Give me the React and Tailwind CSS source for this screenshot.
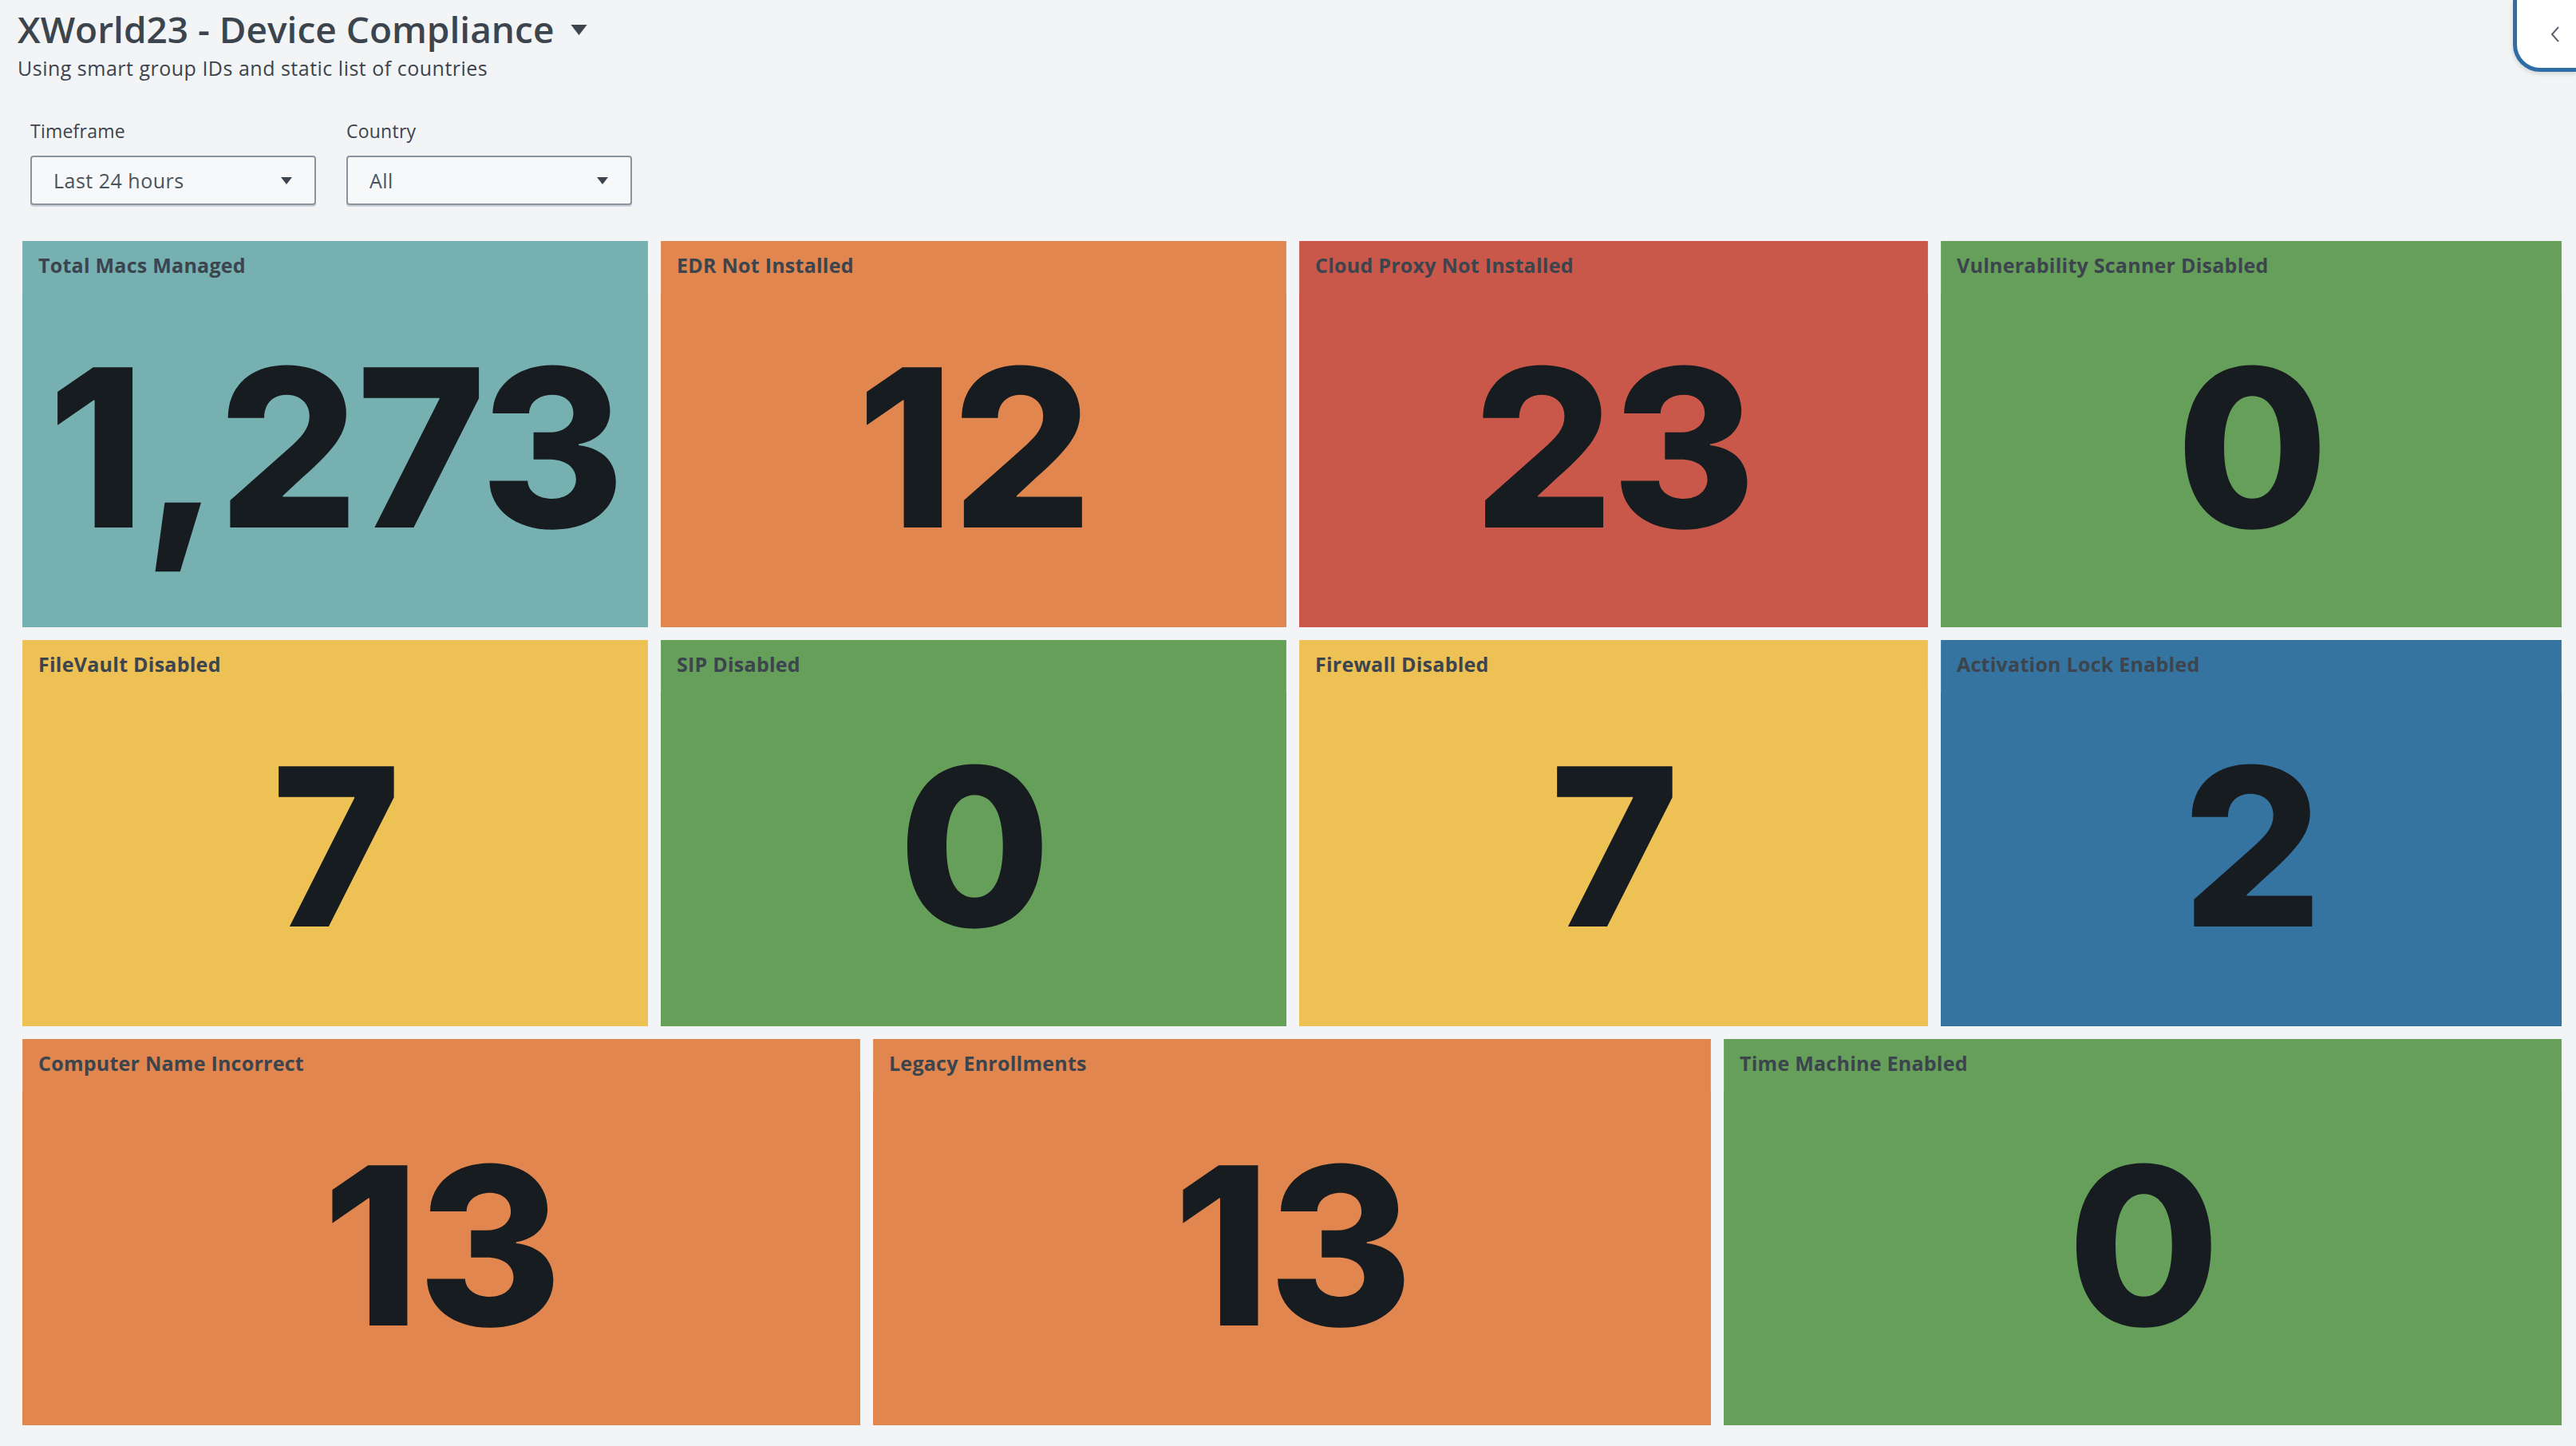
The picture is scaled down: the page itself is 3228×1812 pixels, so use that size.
import React from "react";

const rows = [
  [
    { t: "Total Macs Managed", v: "1,273", c: "bg-[#76b0b0]", w: "w-[784px]" },
    { t: "EDR Not Installed", v: "12", c: "bg-[#e1864f]", w: "w-[784px]" },
    { t: "Cloud Proxy Not Installed", v: "23", c: "bg-[#ca584a]", w: "w-[788px]" },
    { t: "Vulnerability Scanner Disabled", v: "0", c: "bg-[#669f5a]", w: "flex-1" },
  ],
  [
    { t: "FileVault Disabled", v: "7", c: "bg-[#eec154]", w: "w-[784px]" },
    { t: "SIP Disabled", v: "0", c: "bg-[#669f5a]", w: "w-[784px]" },
    { t: "Firewall Disabled", v: "7", c: "bg-[#eec154]", w: "w-[788px]" },
    { t: "Activation Lock Enabled", v: "2", c: "bg-[#3574a0]", w: "flex-1" },
  ],
  [
    { t: "Computer Name Incorrect", v: "13", c: "bg-[#e1864f]", w: "flex-1" },
    { t: "Legacy Enrollments", v: "13", c: "bg-[#e1864f]", w: "flex-1" },
    { t: "Time Machine Enabled", v: "0", c: "bg-[#669f5a]", w: "flex-1" },
  ],
];

function Caret({ className }) {
  return (
    <svg className={className} viewBox="0 0 14 9">
      <path d="M0 0 L14 0 L7 9 Z" fill="#3c444d" />
    </svg>
  );
}

function Dropdown({ label, value }) {
  return (
    <div className="flex flex-col w-[358px]">
      <div className="text-[23px] leading-[26px] text-[#3c444d] tracking-[0.01em]">{label}</div>
      <div className="mt-[18px] h-[62px] flex items-center justify-between pl-[27px] pr-[28px] border-2 border-[#8b949e] rounded-[4px] bg-[#f7f8fa] shadow-[0_2px_0_#c9d0d8]">
        <span className="text-[25px] leading-[30px] text-[#4a535c] tracking-[0.02em]">{value}</span>
        <Caret className="w-[14px] h-[9px]" />
      </div>
    </div>
  );
}

function Tile({ t, v, c, w }) {
  return (
    <div className={`${w} shrink-0 flex flex-col ${c}`}>
      <div className="h-[66px] px-[19px] pt-[15px] border-x border-white/10">
        <div className="text-[25px] leading-[30px] font-bold text-[#3c444d] whitespace-nowrap tracking-[0.01em]">{t}</div>
      </div>
      <div className="flex-1 flex items-center justify-center pb-[33px]">
        <span
          className="text-[276px] leading-none font-extrabold text-[#171c20] tracking-[-0.01em]"
          style={{ fontFamily: 'Inter, "Open Sans", sans-serif' }}
        >
          {v}
        </span>
      </div>
    </div>
  );
}

export default function App() {
  return (
    <div
      className="relative w-full h-[1812px] bg-[#f2f4f6] overflow-hidden"
      style={{ fontFamily: '"Open Sans", "Liberation Sans", sans-serif' }}
    >
      <div className="absolute top-0 right-0 w-[79px] h-[90px] bg-white border-l-[5px] border-b-[5px] border-[#2f6ea4] rounded-bl-[34px] shadow-[0_2px_6px_rgba(0,0,0,0.15)] flex items-center pl-[43px]">
        <svg viewBox="0 0 10 20" className="w-[10px] h-[20px]">
          <path d="M9 1 L1 10 L9 19" fill="none" stroke="#5c6670" strokeWidth="2" />
        </svg>
      </div>

      <div className="pl-[22px] pt-[8px]">
        <div className="flex items-center">
          <h1 className="text-[46px] leading-[56px] font-semibold text-[#3c444d]">
            XWorld23 - Device Compliance
          </h1>
          <Caret className="w-[23px] h-[13px] ml-[20px] mt-[2px]" />
        </div>
        <div className="mt-[5px] text-[25px] leading-[32px] text-[#3c444d] tracking-[0.02em]">
          Using smart group IDs and static list of countries
        </div>
      </div>

      <div className="mt-[50px] pl-[38px] flex gap-[38px]">
        <Dropdown label="Timeframe" value="Last 24 hours" />
        <Dropdown label="Country" value="All" />
      </div>

      <div className="mt-[45px] pl-[28px] pr-[18px] flex flex-col gap-[16px]">
        {rows.map((r, i) => (
          <div key={i} className="h-[484px] flex gap-[16px]">
            {r.map((tile) => (
              <Tile key={tile.t} {...tile} />
            ))}
          </div>
        ))}
      </div>
    </div>
  );
}
